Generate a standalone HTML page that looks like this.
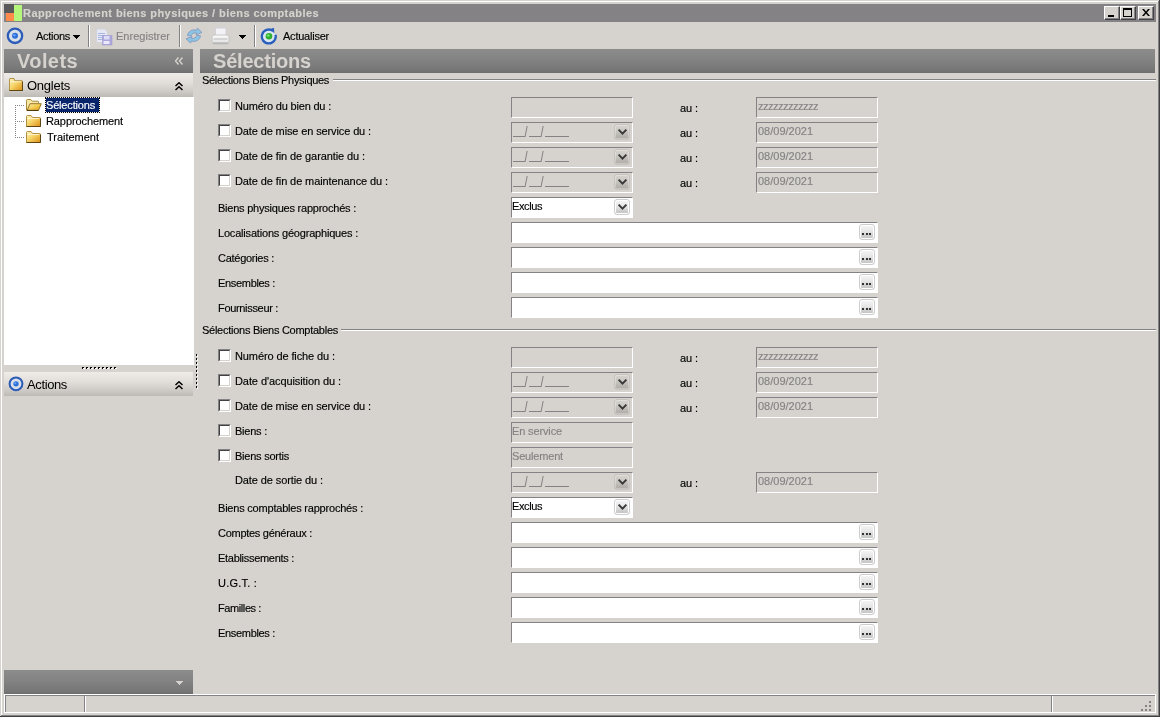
<!DOCTYPE html>
<html><head><meta charset="utf-8"><title>Rapprochement biens physiques / biens comptables</title>
<style>
html,body{margin:0;padding:0;}
body{width:1160px;height:717px;overflow:hidden;background:#d6d3ce;position:relative;font-family:"Liberation Sans",sans-serif;font-size:11px;color:#000;}
.t{position:absolute;white-space:pre;-webkit-text-stroke:0.15px currentColor;}
div,svg{position:absolute;box-sizing:border-box;}
.g{color:#848284;}
.inp{border-top:1px solid #848284;border-left:1px solid #848284;border-bottom:1px solid #fff;border-right:1px solid #fff;}
.w{background:#fff;}
.btn{border:1px solid #cdcdcd;border-radius:3px;background:linear-gradient(#f6f6f6,#e6e6e6 45%,#cfcfcf 75%,#c2c2c2);box-shadow:inset 0 0 0 1px #fff;}
.btng{border-color:#c6c3be;background:linear-gradient(#d6d3ce,#ccc9c4 40%,#b9b6b1 75%,#afaca7);box-shadow:inset 0 0 0 1px rgba(255,255,255,.3);}
#txt{left:0;top:0;width:1160px;height:717px;will-change:transform;}

</style></head>
<body>
<div style="position:absolute;left:0px;top:0px;width:1160px;height:717px;background:#d6d3ce;"></div>
<div style="position:absolute;left:0px;top:0px;width:1160px;height:1px;background:#d6d3ce;"></div>
<div style="position:absolute;left:0px;top:0px;width:1px;height:717px;background:#d6d3ce;"></div>
<div style="position:absolute;left:1px;top:1px;width:1158px;height:1px;background:#fff;"></div>
<div style="position:absolute;left:1px;top:1px;width:1px;height:715px;background:#fff;"></div>
<div style="position:absolute;left:0px;top:716px;width:1160px;height:1px;background:#424142;"></div>
<div style="position:absolute;left:1159px;top:0px;width:1px;height:717px;background:#424142;"></div>
<div style="position:absolute;left:1px;top:715px;width:1158px;height:1px;background:#848284;"></div>
<div style="position:absolute;left:1158px;top:1px;width:1px;height:715px;background:#848284;"></div>
<div style="position:absolute;left:4px;top:4px;width:1152px;height:18px;background:#848284;"></div>
<div style="position:absolute;left:4px;top:4px;width:10px;height:9px;background:#5a595a;"></div>
<div style="position:absolute;left:6px;top:13px;width:8px;height:8px;background:#ff8a4a;"></div>
<div style="position:absolute;left:14px;top:5px;width:8px;height:16px;background:#b5f77b;"></div>
<div style="position:absolute;left:1104px;top:6px;width:16px;height:14px;background:#d6d3ce;border-top:1px solid #fff;border-left:1px solid #fff;border-right:1px solid #424142;border-bottom:1px solid #424142;"><div style="left:0;top:0;width:14px;height:12px;border-right:1px solid #848284;border-bottom:1px solid #848284;"></div><div style="left:3px;top:8px;width:6px;height:2px;background:#000;"></div></div>
<div style="position:absolute;left:1120px;top:6px;width:16px;height:14px;background:#d6d3ce;border-top:1px solid #fff;border-left:1px solid #fff;border-right:1px solid #424142;border-bottom:1px solid #424142;"><div style="left:0;top:0;width:14px;height:12px;border-right:1px solid #848284;border-bottom:1px solid #848284;"></div><div style="left:2px;top:1px;width:9px;height:9px;border:1px solid #000;border-top:2px solid #000;"></div></div>
<div style="position:absolute;left:1138px;top:6px;width:16px;height:14px;background:#d6d3ce;border-top:1px solid #fff;border-left:1px solid #fff;border-right:1px solid #424142;border-bottom:1px solid #424142;"><div style="left:0;top:0;width:14px;height:12px;border-right:1px solid #848284;border-bottom:1px solid #848284;"></div><svg style="left:3px;top:2px" width="8" height="7" viewBox="0 0 8 7"><path d="M0 0h2l2 2.5L6 0h2L5 3.5 8 7H6L4 4.5 2 7H0l3-3.5z" fill="#000"/></svg></div>
<svg style="left:6px;top:27px" width="18" height="18" viewBox="0 0 18 18"><circle cx="9" cy="8.800" r="7.200" fill="#d9e0e8" stroke="#2c5cb8" stroke-width="2.300"/><circle cx="9" cy="8.800" r="3" fill="#2d6fd6"/><circle cx="8.300" cy="8.200" r="1.200" fill="#6aa0ff"/></svg>
<svg style="left:73px;top:35px" width="7" height="4" viewBox="0 0 7 4" shape-rendering="crispEdges"><path d="M0 0h7v1h-1v1h-1v1h-1v1h-1v-1h-1v-1h-1v-1h-1z" fill="#000"/></svg>
<div style="position:absolute;left:88px;top:25px;width:1px;height:22px;background:#848284;"></div>
<div style="position:absolute;left:89px;top:25px;width:1px;height:22px;background:#fff;"></div>
<svg style="left:96px;top:28px" width="17" height="18" viewBox="0 0 17 18">
<path d="M0.500 1h8l3 3v10.500h-11z" fill="#e6e8f3" stroke="#d2d3da" stroke-width="1"/>
<path d="M2 5.500h7M2 7.500h8M2 9.500h6M2 11.500h5" stroke="#a9b6e0" stroke-width="1"/>
<rect x="6.500" y="7.500" width="9.500" height="9.500" fill="#aaa6dc" stroke="#a29ed2" stroke-width=".6"/>
<rect x="8" y="8" width="5.500" height="3.500" fill="#dddbf5"/>
<rect x="7.500" y="13" width="6" height="3" fill="#ece9fb"/>
</svg>
<div style="position:absolute;left:179px;top:25px;width:1px;height:22px;background:#848284;"></div>
<div style="position:absolute;left:180px;top:25px;width:1px;height:22px;background:#fff;"></div>
<svg style="left:185px;top:27px" width="18" height="18" viewBox="0 0 18 18">
<g fill="#8cc4e4" stroke="#7f93be" stroke-width=".8" stroke-linejoin="round">
<path d="M2.500 8.500C3 4.500 7 2 11.500 3.200L12.500 1.200 17 5.500 11 7.800 11.500 6C9 5.500 7 6.500 6 9z"/>
<path d="M15.500 8.800C15 12.800 11 15.300 6.500 14.100L5.500 16.100 1 11.800 7 9.500 6.500 11.300C9 11.800 11 10.800 12 8.300z"/>
</g></svg>
<svg style="left:211px;top:27px" width="19" height="18" viewBox="0 0 19 18">
<defs><linearGradient id="pr" x1="0" y1="0" x2="0" y2="1"><stop offset="0" stop-color="#fbfbfb"/><stop offset="1" stop-color="#dedede"/></linearGradient></defs>
<rect x="4.500" y="1" width="10.500" height="8" fill="#f3f2f6" stroke="#d2d0d6"/>
<rect x="1" y="8" width="17" height="9" rx="2" fill="url(#pr)" stroke="#c4c2c0" stroke-width=".9"/>
<rect x="2.500" y="11.500" width="14" height="1" fill="#bcbcbc"/>
<rect x="2" y="15.500" width="15" height="1.200" fill="#a9a9a9"/>
</svg>
<svg style="left:239px;top:35px" width="7" height="4" viewBox="0 0 7 4" shape-rendering="crispEdges"><path d="M0 0h7v1h-1v1h-1v1h-1v1h-1v-1h-1v-1h-1v-1h-1z" fill="#000"/></svg>
<div style="position:absolute;left:254px;top:25px;width:1px;height:22px;background:#848284;"></div>
<div style="position:absolute;left:255px;top:25px;width:1px;height:22px;background:#fff;"></div>
<svg style="left:260px;top:27px" width="18" height="18" viewBox="0 0 18 18">
<path d="M12.760 3.850A6.900 6.900 0 1 0 15.460 7.710" fill="#dbe6f1" stroke="#2a5fbe" stroke-width="2.400"/>
<circle cx="8.800" cy="9.500" r="5.400" fill="#dbe6f1"/>
<path d="M9.500 2.200L14 0.800 14.300 6.300z" fill="#2a5fbe"/>
<circle cx="9" cy="9.300" r="3.300" fill="#2fae32"/>
<circle cx="8.200" cy="8.600" r="1.400" fill="#72e06a"/>
</svg>
<div style="position:absolute;left:4px;top:49px;width:189px;height:24px;background:linear-gradient(#8d8c8c,#858484 40%,#777676 88%,#6e6d6d);"></div>
<svg style="left:175px;top:57px" width="8" height="8" viewBox="0 0 8 8"><path d="M3.500 0.500L0.500 4 3.500 7.500M7.500 0.500L4.500 4 7.500 7.500" fill="none" stroke="#d6d3ce" stroke-width="1.400"/></svg>
<div style="position:absolute;left:4px;top:73px;width:189px;height:24px;background:linear-gradient(#efebe7,#e2ded9 40%,#cfcbc6 75%,#bdb9b5);"></div>
<svg style="left:9px;top:78px" width="14" height="13" viewBox="0 0 15 12" preserveAspectRatio="none">
<defs><linearGradient id="fg9_78" x1="0" y1="0" x2="1" y2="1"><stop offset="0" stop-color="#fff4c4"/><stop offset=".45" stop-color="#f6d468"/><stop offset="1" stop-color="#dc8e14"/></linearGradient></defs>
<path d="M0.500 11.500V1.500q0-1 1-1h3.500l1.500 2h7q1 0 1 1v8z" fill="url(#fg9_78)" stroke="#b09040"/>
<path d="M14.500 3.500v8h-14" stroke="#5e4612" fill="none"/>
<path d="M1.500 3.500h11.500" stroke="#fffbe6" stroke-width=".8" fill="none"/>
</svg>
<svg style="left:175px;top:82px" width="8" height="9" viewBox="0 0 8 9"><path d="M0.500 4L4 0.800 7.500 4M0.500 8L4 4.800 7.500 8" fill="none" stroke="#000" stroke-width="1.500"/></svg>
<div style="position:absolute;left:4px;top:97px;width:190px;height:268px;background:#fff;"></div>
<div style="position:absolute;left:15px;top:105px;width:1px;height:33px;background-image:repeating-linear-gradient(180deg,#848284 0,#848284 1px,transparent 1px,transparent 2px);"></div>
<div style="position:absolute;left:15px;top:105px;width:10px;height:1px;background-image:repeating-linear-gradient(90deg,#848284 0,#848284 1px,transparent 1px,transparent 2px);"></div>
<div style="position:absolute;left:15px;top:121px;width:10px;height:1px;background-image:repeating-linear-gradient(90deg,#848284 0,#848284 1px,transparent 1px,transparent 2px);"></div>
<div style="position:absolute;left:15px;top:137px;width:10px;height:1px;background-image:repeating-linear-gradient(90deg,#848284 0,#848284 1px,transparent 1px,transparent 2px);"></div>
<svg style="left:26px;top:99px" width="16" height="12" viewBox="0 0 16 12">
<defs><linearGradient id="fg26_99" x1="0" y1="0" x2="1" y2="1"><stop offset="0" stop-color="#fdf0b4"/><stop offset=".55" stop-color="#f3c94a"/><stop offset="1" stop-color="#e09a1c"/></linearGradient></defs>
<path d="M0.500 11V1.500q0-1 1-1h3.300l1.500 1.700h5.400q.8 0 .8 .8V4" fill="#f9e7a4" stroke="#a88a3c"/>
<path d="M0.500 11.500V5" stroke="#a88a3c"/>
<path d="M1.200 11.300L4 4.700h11.300l-2.800 6.600z" fill="url(#fg26_99)" stroke="#8c6a1e" stroke-width=".9"/>
<path d="M1 11.500h11.500" stroke="#4e3a10" stroke-width="1"/>
</svg>
<svg style="left:26px;top:115px" width="15" height="12" viewBox="0 0 15 12" preserveAspectRatio="none">
<defs><linearGradient id="fg26_115" x1="0" y1="0" x2="1" y2="1"><stop offset="0" stop-color="#fff4c4"/><stop offset=".45" stop-color="#f6d468"/><stop offset="1" stop-color="#dc8e14"/></linearGradient></defs>
<path d="M0.500 11.500V1.500q0-1 1-1h3.500l1.500 2h7q1 0 1 1v8z" fill="url(#fg26_115)" stroke="#b09040"/>
<path d="M14.500 3.500v8h-14" stroke="#5e4612" fill="none"/>
<path d="M1.500 3.500h11.500" stroke="#fffbe6" stroke-width=".8" fill="none"/>
</svg>
<svg style="left:26px;top:131px" width="15" height="12" viewBox="0 0 15 12" preserveAspectRatio="none">
<defs><linearGradient id="fg26_131" x1="0" y1="0" x2="1" y2="1"><stop offset="0" stop-color="#fff4c4"/><stop offset=".45" stop-color="#f6d468"/><stop offset="1" stop-color="#dc8e14"/></linearGradient></defs>
<path d="M0.500 11.500V1.500q0-1 1-1h3.500l1.500 2h7q1 0 1 1v8z" fill="url(#fg26_131)" stroke="#b09040"/>
<path d="M14.500 3.500v8h-14" stroke="#5e4612" fill="none"/>
<path d="M1.500 3.500h11.500" stroke="#fffbe6" stroke-width=".8" fill="none"/>
</svg>
<div style="position:absolute;left:45px;top:97px;width:55px;height:16px;background:#f6f1de;border:1px dotted #000;"><div style="left:0;top:0;width:53px;height:14px;background:#08246b;"></div></div>
<div style="position:absolute;left:82px;top:367px;width:2px;height:2px;background:#000;"></div>
<div style="position:absolute;left:83px;top:368px;width:2px;height:1px;background:#fff;"></div>
<div style="position:absolute;left:86px;top:367px;width:2px;height:2px;background:#000;"></div>
<div style="position:absolute;left:87px;top:368px;width:2px;height:1px;background:#fff;"></div>
<div style="position:absolute;left:90px;top:367px;width:2px;height:2px;background:#000;"></div>
<div style="position:absolute;left:91px;top:368px;width:2px;height:1px;background:#fff;"></div>
<div style="position:absolute;left:94px;top:367px;width:2px;height:2px;background:#000;"></div>
<div style="position:absolute;left:95px;top:368px;width:2px;height:1px;background:#fff;"></div>
<div style="position:absolute;left:98px;top:367px;width:2px;height:2px;background:#000;"></div>
<div style="position:absolute;left:99px;top:368px;width:2px;height:1px;background:#fff;"></div>
<div style="position:absolute;left:102px;top:367px;width:2px;height:2px;background:#000;"></div>
<div style="position:absolute;left:103px;top:368px;width:2px;height:1px;background:#fff;"></div>
<div style="position:absolute;left:106px;top:367px;width:2px;height:2px;background:#000;"></div>
<div style="position:absolute;left:107px;top:368px;width:2px;height:1px;background:#fff;"></div>
<div style="position:absolute;left:110px;top:367px;width:2px;height:2px;background:#000;"></div>
<div style="position:absolute;left:111px;top:368px;width:2px;height:1px;background:#fff;"></div>
<div style="position:absolute;left:114px;top:367px;width:2px;height:2px;background:#000;"></div>
<div style="position:absolute;left:115px;top:368px;width:2px;height:1px;background:#fff;"></div>
<div style="position:absolute;left:4px;top:372px;width:189px;height:24px;background:linear-gradient(#efebe7,#e2ded9 40%,#cfcbc6 75%,#bdb9b5);"></div>
<svg style="left:8px;top:376px" width="16" height="16" viewBox="0 0 18 18"><circle cx="9" cy="8.800" r="7.200" fill="#d9e0e8" stroke="#2c5cb8" stroke-width="2.300"/><circle cx="9" cy="8.800" r="3" fill="#2d6fd6"/><circle cx="8.300" cy="8.200" r="1.200" fill="#6aa0ff"/></svg>
<svg style="left:175px;top:381px" width="8" height="9" viewBox="0 0 8 9"><path d="M0.500 4L4 0.800 7.500 4M0.500 8L4 4.800 7.500 8" fill="none" stroke="#000" stroke-width="1.500"/></svg>
<div style="position:absolute;left:4px;top:670px;width:189px;height:24px;background:linear-gradient(#8d8c8c,#858484 40%,#777676 88%,#6e6d6d);"></div>
<svg style="left:176px;top:681px" width="7" height="4" viewBox="0 0 7 4" shape-rendering="crispEdges"><path d="M0 0h7v1h-1v1h-1v1h-1v1h-1v-1h-1v-1h-1v-1h-1z" fill="#d6d3ce"/></svg>
<div style="position:absolute;left:196px;top:354px;width:1px;height:2px;background:#000;"></div>
<div style="position:absolute;left:197px;top:355px;width:1px;height:2px;background:#fff;"></div>
<div style="position:absolute;left:196px;top:358px;width:1px;height:2px;background:#000;"></div>
<div style="position:absolute;left:197px;top:359px;width:1px;height:2px;background:#fff;"></div>
<div style="position:absolute;left:196px;top:362px;width:1px;height:2px;background:#000;"></div>
<div style="position:absolute;left:197px;top:363px;width:1px;height:2px;background:#fff;"></div>
<div style="position:absolute;left:196px;top:366px;width:1px;height:2px;background:#000;"></div>
<div style="position:absolute;left:197px;top:367px;width:1px;height:2px;background:#fff;"></div>
<div style="position:absolute;left:196px;top:370px;width:1px;height:2px;background:#000;"></div>
<div style="position:absolute;left:197px;top:371px;width:1px;height:2px;background:#fff;"></div>
<div style="position:absolute;left:196px;top:374px;width:1px;height:2px;background:#000;"></div>
<div style="position:absolute;left:197px;top:375px;width:1px;height:2px;background:#fff;"></div>
<div style="position:absolute;left:196px;top:378px;width:1px;height:2px;background:#000;"></div>
<div style="position:absolute;left:197px;top:379px;width:1px;height:2px;background:#fff;"></div>
<div style="position:absolute;left:196px;top:382px;width:1px;height:2px;background:#000;"></div>
<div style="position:absolute;left:197px;top:383px;width:1px;height:2px;background:#fff;"></div>
<div style="position:absolute;left:196px;top:386px;width:1px;height:2px;background:#000;"></div>
<div style="position:absolute;left:197px;top:387px;width:1px;height:2px;background:#fff;"></div>
<div style="position:absolute;left:200px;top:49px;width:955px;height:24px;background:linear-gradient(#8d8c8c,#858484 40%,#777676 88%,#6e6d6d);"></div>
<div style="position:absolute;left:333px;top:79px;width:823px;height:1px;background:#848284;"></div>
<div style="position:absolute;left:333px;top:80px;width:823px;height:1px;background:#fff;"></div>
<div style="position:absolute;left:341px;top:329px;width:815px;height:1px;background:#848284;"></div>
<div style="position:absolute;left:341px;top:330px;width:815px;height:1px;background:#fff;"></div>
<div style="position:absolute;left:218px;top:99px;width:13px;height:13px;background:#fff;border-top:1px solid #848284;border-left:1px solid #848284;border-right:1px solid #fff;border-bottom:1px solid #fff;"><div style="left:0;top:0;width:11px;height:11px;border-top:1px solid #424142;border-left:1px solid #424142;border-right:1px solid #d6d3ce;border-bottom:1px solid #d6d3ce;"></div></div>
<div style="position:absolute;left:511px;top:97px;width:122px;height:21px;border-top:1px solid #848284;border-left:1px solid #848284;border-right:1px solid #fff;border-bottom:1px solid #fff;"></div>
<div style="position:absolute;left:756px;top:97px;width:122px;height:21px;border-top:1px solid #848284;border-left:1px solid #848284;border-right:1px solid #fff;border-bottom:1px solid #fff;"></div>
<div style="position:absolute;left:218px;top:124px;width:13px;height:13px;background:#fff;border-top:1px solid #848284;border-left:1px solid #848284;border-right:1px solid #fff;border-bottom:1px solid #fff;"><div style="left:0;top:0;width:11px;height:11px;border-top:1px solid #424142;border-left:1px solid #424142;border-right:1px solid #d6d3ce;border-bottom:1px solid #d6d3ce;"></div></div>
<div style="position:absolute;left:511px;top:122px;width:122px;height:21px;border-top:1px solid #848284;border-left:1px solid #848284;border-right:1px solid #fff;border-bottom:1px solid #fff;"></div>
<div style="position:absolute;left:513px;top:136px;width:12px;height:1px;background:#848284;"></div>
<div style="position:absolute;left:529px;top:136px;width:12px;height:1px;background:#848284;"></div>
<div style="position:absolute;left:545px;top:136px;width:24px;height:1px;background:#848284;"></div>
<svg style="left:524px;top:126px" width="4" height="11" viewBox="0 0 4 11"><path d="M3.200 0L1 11" stroke="#848284" stroke-width="1"/></svg>
<svg style="left:540px;top:126px" width="4" height="11" viewBox="0 0 4 11"><path d="M3.200 0L1 11" stroke="#848284" stroke-width="1"/></svg>
<div class="btn btng" style="left:614px;top:124px;width:16px;height:16px;"></div>
<svg style="left:614px;top:124px" width="16" height="16" viewBox="0 0 16 16"><path d="M4.600 5.600L8.500 9.700 12.400 5.600" fill="none" stroke="#383838" stroke-width="1.900"/></svg>
<div style="position:absolute;left:756px;top:122px;width:122px;height:21px;border-top:1px solid #848284;border-left:1px solid #848284;border-right:1px solid #fff;border-bottom:1px solid #fff;"></div>
<div style="position:absolute;left:218px;top:149px;width:13px;height:13px;background:#fff;border-top:1px solid #848284;border-left:1px solid #848284;border-right:1px solid #fff;border-bottom:1px solid #fff;"><div style="left:0;top:0;width:11px;height:11px;border-top:1px solid #424142;border-left:1px solid #424142;border-right:1px solid #d6d3ce;border-bottom:1px solid #d6d3ce;"></div></div>
<div style="position:absolute;left:511px;top:147px;width:122px;height:21px;border-top:1px solid #848284;border-left:1px solid #848284;border-right:1px solid #fff;border-bottom:1px solid #fff;"></div>
<div style="position:absolute;left:513px;top:161px;width:12px;height:1px;background:#848284;"></div>
<div style="position:absolute;left:529px;top:161px;width:12px;height:1px;background:#848284;"></div>
<div style="position:absolute;left:545px;top:161px;width:24px;height:1px;background:#848284;"></div>
<svg style="left:524px;top:151px" width="4" height="11" viewBox="0 0 4 11"><path d="M3.200 0L1 11" stroke="#848284" stroke-width="1"/></svg>
<svg style="left:540px;top:151px" width="4" height="11" viewBox="0 0 4 11"><path d="M3.200 0L1 11" stroke="#848284" stroke-width="1"/></svg>
<div class="btn btng" style="left:614px;top:149px;width:16px;height:16px;"></div>
<svg style="left:614px;top:149px" width="16" height="16" viewBox="0 0 16 16"><path d="M4.600 5.600L8.500 9.700 12.400 5.600" fill="none" stroke="#383838" stroke-width="1.900"/></svg>
<div style="position:absolute;left:756px;top:147px;width:122px;height:21px;border-top:1px solid #848284;border-left:1px solid #848284;border-right:1px solid #fff;border-bottom:1px solid #fff;"></div>
<div style="position:absolute;left:218px;top:174px;width:13px;height:13px;background:#fff;border-top:1px solid #848284;border-left:1px solid #848284;border-right:1px solid #fff;border-bottom:1px solid #fff;"><div style="left:0;top:0;width:11px;height:11px;border-top:1px solid #424142;border-left:1px solid #424142;border-right:1px solid #d6d3ce;border-bottom:1px solid #d6d3ce;"></div></div>
<div style="position:absolute;left:511px;top:172px;width:122px;height:21px;border-top:1px solid #848284;border-left:1px solid #848284;border-right:1px solid #fff;border-bottom:1px solid #fff;"></div>
<div style="position:absolute;left:513px;top:186px;width:12px;height:1px;background:#848284;"></div>
<div style="position:absolute;left:529px;top:186px;width:12px;height:1px;background:#848284;"></div>
<div style="position:absolute;left:545px;top:186px;width:24px;height:1px;background:#848284;"></div>
<svg style="left:524px;top:176px" width="4" height="11" viewBox="0 0 4 11"><path d="M3.200 0L1 11" stroke="#848284" stroke-width="1"/></svg>
<svg style="left:540px;top:176px" width="4" height="11" viewBox="0 0 4 11"><path d="M3.200 0L1 11" stroke="#848284" stroke-width="1"/></svg>
<div class="btn btng" style="left:614px;top:174px;width:16px;height:16px;"></div>
<svg style="left:614px;top:174px" width="16" height="16" viewBox="0 0 16 16"><path d="M4.600 5.600L8.500 9.700 12.400 5.600" fill="none" stroke="#383838" stroke-width="1.900"/></svg>
<div style="position:absolute;left:756px;top:172px;width:122px;height:21px;border-top:1px solid #848284;border-left:1px solid #848284;border-right:1px solid #fff;border-bottom:1px solid #fff;"></div>
<div style="position:absolute;left:511px;top:197px;width:122px;height:21px;background:#fff;border-top:1px solid #848284;border-left:1px solid #848284;border-right:1px solid #fff;border-bottom:1px solid #fff;"></div>
<div class="btn" style="left:614px;top:199px;width:16px;height:16px;"></div>
<svg style="left:614px;top:199px" width="16" height="16" viewBox="0 0 16 16"><path d="M4.600 5.600L8.500 9.700 12.400 5.600" fill="none" stroke="#383838" stroke-width="1.900"/></svg>
<div style="position:absolute;left:511px;top:222px;width:367px;height:21px;background:#fff;border-top:1px solid #848284;border-left:1px solid #848284;border-right:1px solid #fff;border-bottom:1px solid #fff;"></div>
<div class="btn" style="left:859px;top:224px;width:16px;height:16px;"><div style="left:2px;top:8px;width:2px;height:2px;background:#333"></div><div style="left:6px;top:8px;width:2px;height:2px;background:#333"></div><div style="left:9px;top:8px;width:2px;height:2px;background:#333"></div></div>
<div style="position:absolute;left:511px;top:247px;width:367px;height:21px;background:#fff;border-top:1px solid #848284;border-left:1px solid #848284;border-right:1px solid #fff;border-bottom:1px solid #fff;"></div>
<div class="btn" style="left:859px;top:249px;width:16px;height:16px;"><div style="left:2px;top:8px;width:2px;height:2px;background:#333"></div><div style="left:6px;top:8px;width:2px;height:2px;background:#333"></div><div style="left:9px;top:8px;width:2px;height:2px;background:#333"></div></div>
<div style="position:absolute;left:511px;top:272px;width:367px;height:21px;background:#fff;border-top:1px solid #848284;border-left:1px solid #848284;border-right:1px solid #fff;border-bottom:1px solid #fff;"></div>
<div class="btn" style="left:859px;top:274px;width:16px;height:16px;"><div style="left:2px;top:8px;width:2px;height:2px;background:#333"></div><div style="left:6px;top:8px;width:2px;height:2px;background:#333"></div><div style="left:9px;top:8px;width:2px;height:2px;background:#333"></div></div>
<div style="position:absolute;left:511px;top:297px;width:367px;height:21px;background:#fff;border-top:1px solid #848284;border-left:1px solid #848284;border-right:1px solid #fff;border-bottom:1px solid #fff;"></div>
<div class="btn" style="left:859px;top:299px;width:16px;height:16px;"><div style="left:2px;top:8px;width:2px;height:2px;background:#333"></div><div style="left:6px;top:8px;width:2px;height:2px;background:#333"></div><div style="left:9px;top:8px;width:2px;height:2px;background:#333"></div></div>
<div style="position:absolute;left:218px;top:349px;width:13px;height:13px;background:#fff;border-top:1px solid #848284;border-left:1px solid #848284;border-right:1px solid #fff;border-bottom:1px solid #fff;"><div style="left:0;top:0;width:11px;height:11px;border-top:1px solid #424142;border-left:1px solid #424142;border-right:1px solid #d6d3ce;border-bottom:1px solid #d6d3ce;"></div></div>
<div style="position:absolute;left:511px;top:347px;width:122px;height:21px;border-top:1px solid #848284;border-left:1px solid #848284;border-right:1px solid #fff;border-bottom:1px solid #fff;"></div>
<div style="position:absolute;left:756px;top:347px;width:122px;height:21px;border-top:1px solid #848284;border-left:1px solid #848284;border-right:1px solid #fff;border-bottom:1px solid #fff;"></div>
<div style="position:absolute;left:218px;top:374px;width:13px;height:13px;background:#fff;border-top:1px solid #848284;border-left:1px solid #848284;border-right:1px solid #fff;border-bottom:1px solid #fff;"><div style="left:0;top:0;width:11px;height:11px;border-top:1px solid #424142;border-left:1px solid #424142;border-right:1px solid #d6d3ce;border-bottom:1px solid #d6d3ce;"></div></div>
<div style="position:absolute;left:511px;top:372px;width:122px;height:21px;border-top:1px solid #848284;border-left:1px solid #848284;border-right:1px solid #fff;border-bottom:1px solid #fff;"></div>
<div style="position:absolute;left:513px;top:386px;width:12px;height:1px;background:#848284;"></div>
<div style="position:absolute;left:529px;top:386px;width:12px;height:1px;background:#848284;"></div>
<div style="position:absolute;left:545px;top:386px;width:24px;height:1px;background:#848284;"></div>
<svg style="left:524px;top:376px" width="4" height="11" viewBox="0 0 4 11"><path d="M3.200 0L1 11" stroke="#848284" stroke-width="1"/></svg>
<svg style="left:540px;top:376px" width="4" height="11" viewBox="0 0 4 11"><path d="M3.200 0L1 11" stroke="#848284" stroke-width="1"/></svg>
<div class="btn btng" style="left:614px;top:374px;width:16px;height:16px;"></div>
<svg style="left:614px;top:374px" width="16" height="16" viewBox="0 0 16 16"><path d="M4.600 5.600L8.500 9.700 12.400 5.600" fill="none" stroke="#383838" stroke-width="1.900"/></svg>
<div style="position:absolute;left:756px;top:372px;width:122px;height:21px;border-top:1px solid #848284;border-left:1px solid #848284;border-right:1px solid #fff;border-bottom:1px solid #fff;"></div>
<div style="position:absolute;left:218px;top:399px;width:13px;height:13px;background:#fff;border-top:1px solid #848284;border-left:1px solid #848284;border-right:1px solid #fff;border-bottom:1px solid #fff;"><div style="left:0;top:0;width:11px;height:11px;border-top:1px solid #424142;border-left:1px solid #424142;border-right:1px solid #d6d3ce;border-bottom:1px solid #d6d3ce;"></div></div>
<div style="position:absolute;left:511px;top:397px;width:122px;height:21px;border-top:1px solid #848284;border-left:1px solid #848284;border-right:1px solid #fff;border-bottom:1px solid #fff;"></div>
<div style="position:absolute;left:513px;top:411px;width:12px;height:1px;background:#848284;"></div>
<div style="position:absolute;left:529px;top:411px;width:12px;height:1px;background:#848284;"></div>
<div style="position:absolute;left:545px;top:411px;width:24px;height:1px;background:#848284;"></div>
<svg style="left:524px;top:401px" width="4" height="11" viewBox="0 0 4 11"><path d="M3.200 0L1 11" stroke="#848284" stroke-width="1"/></svg>
<svg style="left:540px;top:401px" width="4" height="11" viewBox="0 0 4 11"><path d="M3.200 0L1 11" stroke="#848284" stroke-width="1"/></svg>
<div class="btn btng" style="left:614px;top:399px;width:16px;height:16px;"></div>
<svg style="left:614px;top:399px" width="16" height="16" viewBox="0 0 16 16"><path d="M4.600 5.600L8.500 9.700 12.400 5.600" fill="none" stroke="#383838" stroke-width="1.900"/></svg>
<div style="position:absolute;left:756px;top:397px;width:122px;height:21px;border-top:1px solid #848284;border-left:1px solid #848284;border-right:1px solid #fff;border-bottom:1px solid #fff;"></div>
<div style="position:absolute;left:218px;top:424px;width:13px;height:13px;background:#fff;border-top:1px solid #848284;border-left:1px solid #848284;border-right:1px solid #fff;border-bottom:1px solid #fff;"><div style="left:0;top:0;width:11px;height:11px;border-top:1px solid #424142;border-left:1px solid #424142;border-right:1px solid #d6d3ce;border-bottom:1px solid #d6d3ce;"></div></div>
<div style="position:absolute;left:511px;top:422px;width:122px;height:21px;border-top:1px solid #848284;border-left:1px solid #848284;border-right:1px solid #fff;border-bottom:1px solid #fff;"></div>
<div style="position:absolute;left:218px;top:449px;width:13px;height:13px;background:#fff;border-top:1px solid #848284;border-left:1px solid #848284;border-right:1px solid #fff;border-bottom:1px solid #fff;"><div style="left:0;top:0;width:11px;height:11px;border-top:1px solid #424142;border-left:1px solid #424142;border-right:1px solid #d6d3ce;border-bottom:1px solid #d6d3ce;"></div></div>
<div style="position:absolute;left:511px;top:447px;width:122px;height:21px;border-top:1px solid #848284;border-left:1px solid #848284;border-right:1px solid #fff;border-bottom:1px solid #fff;"></div>
<div style="position:absolute;left:511px;top:472px;width:122px;height:21px;border-top:1px solid #848284;border-left:1px solid #848284;border-right:1px solid #fff;border-bottom:1px solid #fff;"></div>
<div style="position:absolute;left:513px;top:486px;width:12px;height:1px;background:#848284;"></div>
<div style="position:absolute;left:529px;top:486px;width:12px;height:1px;background:#848284;"></div>
<div style="position:absolute;left:545px;top:486px;width:24px;height:1px;background:#848284;"></div>
<svg style="left:524px;top:476px" width="4" height="11" viewBox="0 0 4 11"><path d="M3.200 0L1 11" stroke="#848284" stroke-width="1"/></svg>
<svg style="left:540px;top:476px" width="4" height="11" viewBox="0 0 4 11"><path d="M3.200 0L1 11" stroke="#848284" stroke-width="1"/></svg>
<div class="btn btng" style="left:614px;top:474px;width:16px;height:16px;"></div>
<svg style="left:614px;top:474px" width="16" height="16" viewBox="0 0 16 16"><path d="M4.600 5.600L8.500 9.700 12.400 5.600" fill="none" stroke="#383838" stroke-width="1.900"/></svg>
<div style="position:absolute;left:756px;top:472px;width:122px;height:21px;border-top:1px solid #848284;border-left:1px solid #848284;border-right:1px solid #fff;border-bottom:1px solid #fff;"></div>
<div style="position:absolute;left:511px;top:497px;width:122px;height:21px;background:#fff;border-top:1px solid #848284;border-left:1px solid #848284;border-right:1px solid #fff;border-bottom:1px solid #fff;"></div>
<div class="btn" style="left:614px;top:499px;width:16px;height:16px;"></div>
<svg style="left:614px;top:499px" width="16" height="16" viewBox="0 0 16 16"><path d="M4.600 5.600L8.500 9.700 12.400 5.600" fill="none" stroke="#383838" stroke-width="1.900"/></svg>
<div style="position:absolute;left:511px;top:522px;width:367px;height:21px;background:#fff;border-top:1px solid #848284;border-left:1px solid #848284;border-right:1px solid #fff;border-bottom:1px solid #fff;"></div>
<div class="btn" style="left:859px;top:524px;width:16px;height:16px;"><div style="left:2px;top:8px;width:2px;height:2px;background:#333"></div><div style="left:6px;top:8px;width:2px;height:2px;background:#333"></div><div style="left:9px;top:8px;width:2px;height:2px;background:#333"></div></div>
<div style="position:absolute;left:511px;top:547px;width:367px;height:21px;background:#fff;border-top:1px solid #848284;border-left:1px solid #848284;border-right:1px solid #fff;border-bottom:1px solid #fff;"></div>
<div class="btn" style="left:859px;top:549px;width:16px;height:16px;"><div style="left:2px;top:8px;width:2px;height:2px;background:#333"></div><div style="left:6px;top:8px;width:2px;height:2px;background:#333"></div><div style="left:9px;top:8px;width:2px;height:2px;background:#333"></div></div>
<div style="position:absolute;left:511px;top:572px;width:367px;height:21px;background:#fff;border-top:1px solid #848284;border-left:1px solid #848284;border-right:1px solid #fff;border-bottom:1px solid #fff;"></div>
<div class="btn" style="left:859px;top:574px;width:16px;height:16px;"><div style="left:2px;top:8px;width:2px;height:2px;background:#333"></div><div style="left:6px;top:8px;width:2px;height:2px;background:#333"></div><div style="left:9px;top:8px;width:2px;height:2px;background:#333"></div></div>
<div style="position:absolute;left:511px;top:597px;width:367px;height:21px;background:#fff;border-top:1px solid #848284;border-left:1px solid #848284;border-right:1px solid #fff;border-bottom:1px solid #fff;"></div>
<div class="btn" style="left:859px;top:599px;width:16px;height:16px;"><div style="left:2px;top:8px;width:2px;height:2px;background:#333"></div><div style="left:6px;top:8px;width:2px;height:2px;background:#333"></div><div style="left:9px;top:8px;width:2px;height:2px;background:#333"></div></div>
<div style="position:absolute;left:511px;top:622px;width:367px;height:21px;background:#fff;border-top:1px solid #848284;border-left:1px solid #848284;border-right:1px solid #fff;border-bottom:1px solid #fff;"></div>
<div class="btn" style="left:859px;top:624px;width:16px;height:16px;"><div style="left:2px;top:8px;width:2px;height:2px;background:#333"></div><div style="left:6px;top:8px;width:2px;height:2px;background:#333"></div><div style="left:9px;top:8px;width:2px;height:2px;background:#333"></div></div>
<div style="position:absolute;left:4px;top:694px;width:1152px;height:1px;background:#fff;"></div>
<div style="position:absolute;left:4px;top:694px;width:1px;height:19px;background:#fff;"></div>
<div style="position:absolute;left:5px;top:695px;width:1150px;height:1px;background:#848284;"></div>
<div style="position:absolute;left:5px;top:695px;width:1px;height:17px;background:#848284;"></div>
<div style="position:absolute;left:5px;top:712px;width:1151px;height:1px;background:#fff;"></div>
<div style="position:absolute;left:1155px;top:695px;width:1px;height:18px;background:#fff;"></div>
<div style="position:absolute;left:84px;top:696px;width:1px;height:16px;background:#848284;"></div>
<div style="position:absolute;left:85px;top:696px;width:1px;height:16px;background:#fff;"></div>
<div style="position:absolute;left:1051px;top:696px;width:1px;height:16px;background:#848284;"></div>
<div style="position:absolute;left:1052px;top:696px;width:1px;height:16px;background:#fff;"></div>
<div style="position:absolute;left:1149px;top:701px;width:2px;height:2px;background:#848284;"></div>
<div style="position:absolute;left:1145px;top:705px;width:2px;height:2px;background:#848284;"></div>
<div style="position:absolute;left:1149px;top:705px;width:2px;height:2px;background:#848284;"></div>
<div style="position:absolute;left:1141px;top:709px;width:2px;height:2px;background:#848284;"></div>
<div style="position:absolute;left:1145px;top:709px;width:2px;height:2px;background:#848284;"></div>
<div style="position:absolute;left:1149px;top:709px;width:2px;height:2px;background:#848284;"></div>
<div id="txt">
<span class="t" style="left:23px;top:6px;font-size:11px;line-height:14px;font-weight:bold;color:#d6d3ce;letter-spacing:0.436px;">Rapprochement biens physiques / biens comptables</span>
<span class="t" style="left:36px;top:29px;font-size:11px;line-height:14px;letter-spacing:-0.297px;">Actions</span>
<span class="t" style="left:116px;top:29px;font-size:11px;line-height:14px;color:#848284;letter-spacing:0.018px;">Enregistrer</span>
<span class="t" style="left:283px;top:29px;font-size:11px;line-height:14px;letter-spacing:-0.230px;">Actualiser</span>
<span class="t" style="left:17px;top:50px;font-size:20px;line-height:23px;font-weight:bold;-webkit-text-stroke:0;color:#d6d3ce;letter-spacing:0.409px;">Volets</span>
<span class="t" style="left:27px;top:78px;font-size:13px;line-height:16px;-webkit-text-stroke:0;letter-spacing:-0.259px;">Onglets</span>
<span class="t" style="left:46px;top:98px;font-size:11px;line-height:14px;color:#fff;letter-spacing:-0.177px;">Sélections</span>
<span class="t" style="left:46px;top:114px;font-size:11px;line-height:14px;letter-spacing:-0.099px;">Rapprochement</span>
<span class="t" style="left:47px;top:130px;font-size:11px;line-height:14px;letter-spacing:-0.017px;">Traitement</span>
<span class="t" style="left:27px;top:377px;font-size:13px;line-height:16px;-webkit-text-stroke:0;letter-spacing:-0.377px;">Actions</span>
<span class="t" style="left:213px;top:50px;font-size:20px;line-height:23px;font-weight:bold;-webkit-text-stroke:0;color:#d6d3ce;letter-spacing:-0.205px;">Sélections</span>
<span class="t" style="left:202px;top:73px;font-size:11px;line-height:14px;letter-spacing:-0.313px;">Sélections Biens Physiques</span>
<span class="t" style="left:202px;top:323px;font-size:11px;line-height:14px;letter-spacing:-0.262px;">Sélections Biens Comptables</span>
<span class="t" style="left:235px;top:99px;font-size:11px;line-height:14px;letter-spacing:-0.193px;">Numéro du bien du :</span>
<span class="t" style="left:680px;top:101px;font-size:11px;line-height:14px;letter-spacing:-0.090px;">au :</span>
<span class="t" style="left:758px;top:99px;font-size:11px;line-height:14px;color:#848284;letter-spacing:-0.500px;">zzzzzzzzzzzz</span>
<span class="t" style="left:235px;top:124px;font-size:11px;line-height:14px;letter-spacing:-0.122px;">Date de mise en service du :</span>
<span class="t" style="left:680px;top:126px;font-size:11px;line-height:14px;letter-spacing:-0.090px;">au :</span>
<span class="t" style="left:758px;top:124px;font-size:11px;line-height:14px;color:#848284;letter-spacing:-0.006px;">08/09/2021</span>
<span class="t" style="left:235px;top:149px;font-size:11px;line-height:14px;letter-spacing:-0.097px;">Date de fin de garantie du :</span>
<span class="t" style="left:680px;top:151px;font-size:11px;line-height:14px;letter-spacing:-0.090px;">au :</span>
<span class="t" style="left:758px;top:149px;font-size:11px;line-height:14px;color:#848284;letter-spacing:-0.006px;">08/09/2021</span>
<span class="t" style="left:235px;top:174px;font-size:11px;line-height:14px;letter-spacing:-0.095px;">Date de fin de maintenance du :</span>
<span class="t" style="left:680px;top:176px;font-size:11px;line-height:14px;letter-spacing:-0.090px;">au :</span>
<span class="t" style="left:758px;top:174px;font-size:11px;line-height:14px;color:#848284;letter-spacing:-0.006px;">08/09/2021</span>
<span class="t" style="left:218px;top:201px;font-size:11px;line-height:14px;letter-spacing:-0.225px;">Biens physiques rapprochés :</span>
<span class="t" style="left:512px;top:199px;font-size:11px;line-height:14px;color:#000;letter-spacing:-0.401px;">Exclus</span>
<span class="t" style="left:218px;top:226px;font-size:11px;line-height:14px;letter-spacing:-0.191px;">Localisations géographiques :</span>
<span class="t" style="left:218px;top:251px;font-size:11px;line-height:14px;letter-spacing:-0.276px;">Catégories :</span>
<span class="t" style="left:218px;top:276px;font-size:11px;line-height:14px;letter-spacing:-0.321px;">Ensembles :</span>
<span class="t" style="left:218px;top:301px;font-size:11px;line-height:14px;letter-spacing:-0.323px;">Fournisseur :</span>
<span class="t" style="left:235px;top:349px;font-size:11px;line-height:14px;letter-spacing:-0.106px;">Numéro de fiche du :</span>
<span class="t" style="left:680px;top:351px;font-size:11px;line-height:14px;letter-spacing:-0.090px;">au :</span>
<span class="t" style="left:758px;top:349px;font-size:11px;line-height:14px;color:#848284;letter-spacing:-0.500px;">zzzzzzzzzzzz</span>
<span class="t" style="left:235px;top:374px;font-size:11px;line-height:14px;letter-spacing:-0.082px;">Date d'acquisition du :</span>
<span class="t" style="left:680px;top:376px;font-size:11px;line-height:14px;letter-spacing:-0.090px;">au :</span>
<span class="t" style="left:758px;top:374px;font-size:11px;line-height:14px;color:#848284;letter-spacing:-0.006px;">08/09/2021</span>
<span class="t" style="left:235px;top:399px;font-size:11px;line-height:14px;letter-spacing:-0.122px;">Date de mise en service du :</span>
<span class="t" style="left:680px;top:401px;font-size:11px;line-height:14px;letter-spacing:-0.090px;">au :</span>
<span class="t" style="left:758px;top:399px;font-size:11px;line-height:14px;color:#848284;letter-spacing:-0.006px;">08/09/2021</span>
<span class="t" style="left:235px;top:424px;font-size:11px;line-height:14px;letter-spacing:-0.234px;">Biens :</span>
<span class="t" style="left:512px;top:424px;font-size:11px;line-height:14px;color:#848284;letter-spacing:-0.136px;">En service</span>
<span class="t" style="left:235px;top:449px;font-size:11px;line-height:14px;letter-spacing:-0.238px;">Biens sortis</span>
<span class="t" style="left:512px;top:449px;font-size:11px;line-height:14px;color:#848284;letter-spacing:-0.177px;">Seulement</span>
<span class="t" style="left:235px;top:473px;font-size:11px;line-height:14px;letter-spacing:-0.100px;">Date de sortie du :</span>
<span class="t" style="left:680px;top:476px;font-size:11px;line-height:14px;letter-spacing:-0.090px;">au :</span>
<span class="t" style="left:758px;top:474px;font-size:11px;line-height:14px;color:#848284;letter-spacing:-0.006px;">08/09/2021</span>
<span class="t" style="left:218px;top:501px;font-size:11px;line-height:14px;letter-spacing:-0.208px;">Biens comptables rapprochés :</span>
<span class="t" style="left:512px;top:499px;font-size:11px;line-height:14px;color:#000;letter-spacing:-0.401px;">Exclus</span>
<span class="t" style="left:218px;top:526px;font-size:11px;line-height:14px;letter-spacing:-0.281px;">Comptes généraux :</span>
<span class="t" style="left:218px;top:551px;font-size:11px;line-height:14px;letter-spacing:-0.294px;">Etablissements :</span>
<span class="t" style="left:218px;top:576px;font-size:11px;line-height:14px;letter-spacing:0.215px;">U.G.T. :</span>
<span class="t" style="left:218px;top:601px;font-size:11px;line-height:14px;letter-spacing:-0.406px;">Familles :</span>
<span class="t" style="left:218px;top:626px;font-size:11px;line-height:14px;letter-spacing:-0.321px;">Ensembles :</span>
</div>
</body></html>
